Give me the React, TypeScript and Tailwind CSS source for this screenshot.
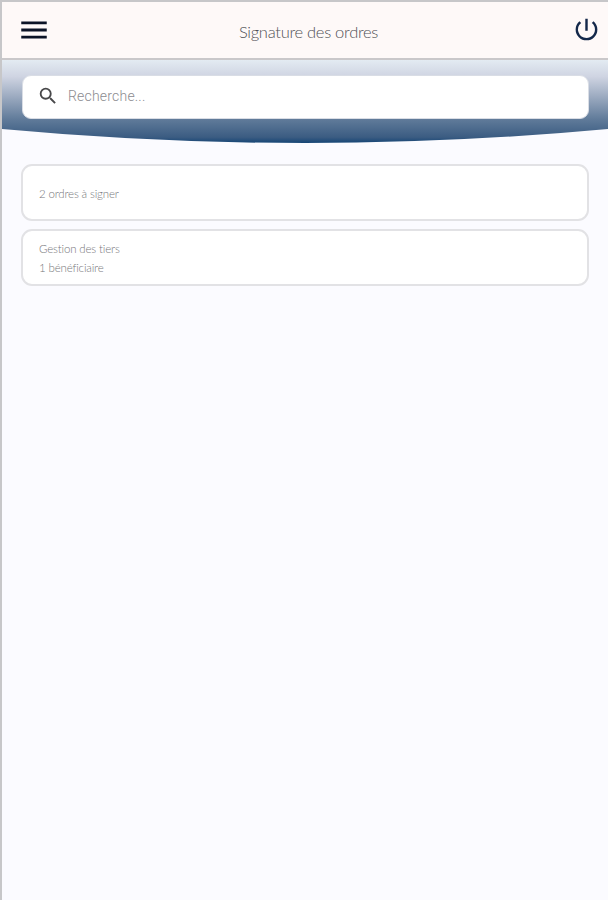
import { MdMenu, MdPowerSettingsNew, MdSearch } from "react-icons/md";

interface Task {
  id: string;
  lines: string[];
}

const TASKS: Task[] = [
  { id: "orders", lines: ["2 ordres à signer"] },
  { id: "recipients", lines: ["Gestion des tiers", "1 bénéficiaire"] },
];

function Header() {
  return (
    <header className="flex h-[58px] items-center justify-between border-b-2 border-[#cac8ca] bg-[#fef9f8] pl-[15px] pr-[7px]">
      <button aria-label="Menu" className="text-[#0b1326]">
        <MdMenu size={34} />
      </button>
      <h1 className="pt-[5px] pr-[6px] text-[16.5px] font-light tracking-[-0.28px] text-[#505055]">Signature des ordres</h1>
      <button aria-label="Déconnexion" className="pb-[2px] text-[#14284a]">
        <MdPowerSettingsNew size={29} />
      </button>
    </header>
  );
}

function SearchBanner() {
  return (
    <div className="relative h-[83px] pl-[20px] pr-[19px] pt-[15px]">
      <svg className="absolute inset-0 h-full w-full" viewBox="0 0 606 83" preserveAspectRatio="none" aria-hidden="true">
        <defs>
          <linearGradient id="banner" x1="0" y1="0" x2="0" y2="1">
            <stop offset="0" stopColor="#e3ebf2" />
            <stop offset="0.2" stopColor="#cfd4e2" />
            <stop offset="0.45" stopColor="#9aa9bf" />
            <stop offset="0.72" stopColor="#5f7a99" />
            <stop offset="0.93" stopColor="#3b5c82" />
            <stop offset="1" stopColor="#154575" />
          </linearGradient>
        </defs>
        <path d="M0 0H606V69Q303 97 0 69Z" fill="url(#banner)" />
      </svg>
      <label className="relative flex h-[44px] items-center rounded-[9px] border border-[#d9dde5] bg-white pb-[2px] pl-[14px]">
        <MdSearch size={22} className="text-[#48484a]" />
        <input
          type="text"
          placeholder="Recherche..."
          className="ml-[9px] w-64 bg-transparent font-[Roboto,sans-serif] text-[14px] font-light tracking-[0.2px] outline-none placeholder:text-[#8c8c90]"
        />
      </label>
    </div>
  );
}

export default function App() {
  return (
    <div className="min-h-screen border-l-2 border-t-2 border-[#c7c7c9] bg-[#fbfbff] font-[Lato,sans-serif]">
      <Header />
      <SearchBanner />
      <main className="flex flex-col gap-2 pl-[19px] pr-[19px] pt-[21px]">
        {TASKS.map((task) => (
          <div
            key={task.id}
            className="flex h-[57px] flex-col justify-center rounded-[11px] border-2 border-[#e2e2e5] bg-white pl-[16px] pt-px"
          >
            {task.lines.map((line) => (
              <p key={line} className="text-[11.5px] leading-[19px] font-light tracking-[-0.16px] text-[#77777b]">
                {line}
              </p>
            ))}
          </div>
        ))}
      </main>
    </div>
  );
}
